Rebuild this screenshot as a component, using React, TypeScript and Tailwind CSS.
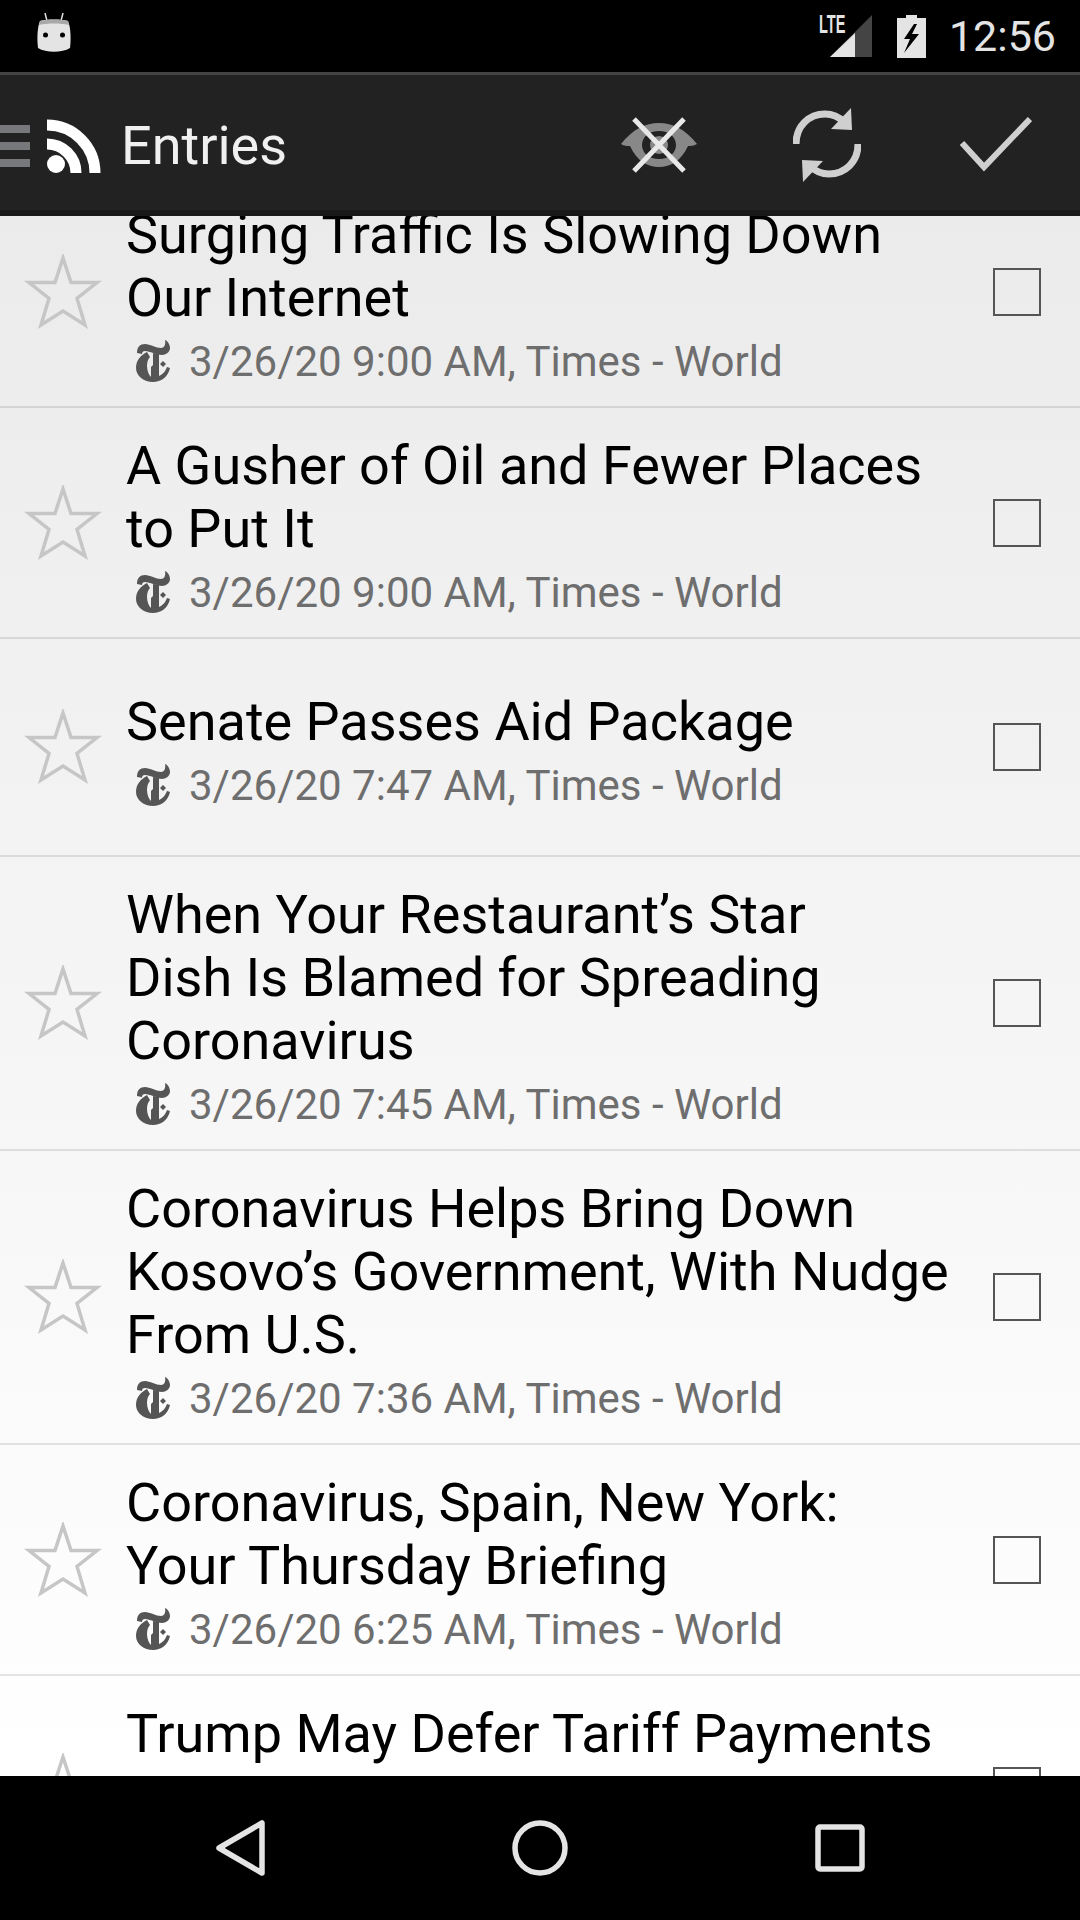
import React from 'react';

type Entry = { title: string[]; time: string };

const entries: Entry[] = [
  { title: ['Surging Traffic Is Slowing Down', 'Our Internet'], time: '3/26/20 9:00 AM' },
  { title: ['A Gusher of Oil and Fewer Places', 'to Put It'], time: '3/26/20 9:00 AM' },
  { title: ['Senate Passes Aid Package'], time: '3/26/20 7:47 AM' },
  { title: ['When Your Restaurant’s Star', 'Dish Is Blamed for Spreading', 'Coronavirus'], time: '3/26/20 7:45 AM' },
  { title: ['Coronavirus Helps Bring Down', 'Kosovo’s Government, With Nudge', 'From U.S.'], time: '3/26/20 7:36 AM' },
  { title: ['Coronavirus, Spain, New York:', 'Your Thursday Briefing'], time: '3/26/20 6:25 AM' },
  { title: ['Trump May Defer Tariff Payments', 'to Raise Money'], time: '3/26/20 6:20 AM' },
];

const StarIcon = () => (
  <svg width="78" height="76" viewBox="0 0 78 76" fill="none">
    <path
      d="M39 4 L47 28.5 L73 28.5 L53 44.5 L61 71 L39 57 L17 71 L25 44.5 L5 28.5 L31 28.5 Z"
      stroke="#c6c6c6"
      strokeWidth="3.5"
      strokeLinejoin="miter"
    />
  </svg>
);

// rough NYT blackletter T
const TimesIcon = () => (
  <svg width="34" height="42" viewBox="0 0 34 42" fill="#555555">
    <path d="M1 13 C1 7 4 4 9 4 C14 4 20 8 25 8 C28 8 30 5 29 0 C32 1 34 5 34 8 C34 12 30 15 26 15 C20 15 14 11 9 11 C7 11 6 12 6 14 Z" />
    <path
      fillRule="evenodd"
      d="M11 12 C5 15 0 20 0 28 C0 36 8 42 17 42 C25 42 32 37 34 28 L31 27 C29 32 27 34 23 36 L23 14 L17 13 L17 25 L15 27 L15 37 C13 35 11 31 11 26 C11 22 12 19 14 17 Z"
    />
    <path d="M24 24 L27 21 L30 24 L27 27 Z" />
  </svg>
);

const EntryRow = ({ entry }: { entry: Entry }) => (
  <div className="flex items-center min-h-[218px] border-b-[2px] border-black/10">
    <div className="w-[126px] shrink-0 pl-[24px]">
      <StarIcon />
    </div>
    <div className="flex-1 min-w-0 pt-[26px] pb-[13px]">
      <div className="text-[54px] leading-[63px] text-black whitespace-nowrap">
        {entry.title.map((line) => (
          <div key={line}>{line}</div>
        ))}
      </div>
      <div className="flex items-center h-[64px] pl-[10px] gap-[19px] text-[42px] text-[#6e6e6e] whitespace-nowrap">
        <TimesIcon />
        <span>{entry.time}, Times - World</span>
      </div>
    </div>
    <div className="w-[48px] h-[48px] border-[2px] border-[#555555] shrink-0 mr-[39px]" />
  </div>
);

const StatusBar = () => (
  <div className="h-[72px] bg-black shrink-0 flex items-center pl-[37px] pr-[24px] text-[#e4e4e4]">
    <svg width="34" height="42" viewBox="0 0 34 42" fill="none" className="mb-[7px]">
      <path d="M8 1 L10 9 M26 1 L24 9" stroke="#dddddd" strokeWidth="1.5" />
      <path d="M3 9 C10 7 24 7 31 9 C34 16 34 28 33 36 C25 41 9 41 1 36 C0 28 0 16 3 9 Z" fill="#e4e4e4" />
      <path d="M3 9 C10 7 24 7 31 9 L32 13 C24 11 10 11 2 13 Z" fill="#a8a8a8" />
      <circle cx="8.5" cy="23" r="2.5" fill="#000" />
      <circle cx="25.5" cy="23" r="2.5" fill="#000" />
    </svg>
    <div className="flex-1" />
    <div className="relative w-[53px] h-[42px]">
      <svg width="42" height="42" viewBox="0 0 42 42" className="absolute right-0 top-0">
        <path d="M42 0 V42 H0 Z" fill="#444444" />
        <path d="M25 18 V42 H0 Z" fill="#e4e4e4" />
      </svg>
      <span className="absolute left-0 top-[-5px] font-['Liberation_Sans'] font-bold text-[25px] leading-[28px] scale-x-[0.58] origin-left">LTE</span>
    </div>
    <svg width="29" height="43" viewBox="0 0 29 43" className="ml-[25px]">
      <path
        fillRule="evenodd"
        fill="#e4e4e4"
        d="M9 0 H20 V3 H29 V43 H0 V3 H9 Z M17 9 L7 24 H13 L7 38 L22 19 H15 L20 9 Z"
      />
    </svg>
    <span className="ml-[23px] text-[43px] leading-[72px] font-['Roboto',sans-serif]">12:56</span>
  </div>
);

const Toolbar = () => (
  <div className="h-[144px] shrink-0 bg-[#222222] border-t-[3px] border-b-[6px] border-t-[#444444] border-b-[#191919] flex items-center pt-[5px]">
    <div className="flex flex-col gap-[9px] w-[30px] mt-[2px]">
      <div className="h-[8px] bg-[#77787c]" />
      <div className="h-[8px] bg-[#77787c]" />
      <div className="h-[8px] bg-[#77787c]" />
    </div>
    <svg width="54" height="54" viewBox="0 0 54 54" fill="none" className="ml-[17px] mt-[2px]">
      <circle cx="9" cy="45" r="9" fill="#fff" />
      <path d="M0 25 A29 29 0 0 1 29 54 M0 6 A48 48 0 0 1 48 54" stroke="#fff" strokeWidth="11" />
    </svg>
    <span className="ml-[20px] mt-[2px] text-[54px] leading-none text-[#f0f0f0]">Entries</span>
    <div className="flex-1" />
    <svg width="76" height="56" viewBox="0 0 76 56" fill="none" className="mr-[96px]">
      <path
        fillRule="evenodd"
        fill="#888888"
        d="M0 27 C12 12 24 6 38 6 C52 6 64 12 76 27 C72 29 70 29 67 29 C60 44 50 50 38 50 C26 50 16 44 9 29 C6 29 3 29 0 27 Z M38 14 C28 14 21 20 21 28 C21 36 28 42 38 42 C48 42 55 36 55 28 C55 20 48 14 38 14 Z"
      />
      <circle cx="38" cy="28" r="9" fill="#888888" />
      <path d="M13 2 L63 54 M63 2 L13 54" stroke="#e8e8e8" strokeWidth="5" />
    </svg>
    <svg width="68" height="74" viewBox="0 0 68 74" fill="none" className="mr-[99px]">
      <path d="M3 36 C3 18 16 6 32 6 C40 6 46 9 51 14" stroke="#cfcfcf" strokeWidth="7" />
      <path d="M65 36 C65 54 52 66 36 66 C28 66 22 63 17 58" stroke="#cfcfcf" strokeWidth="7" />
      <path d="M58 0 L59 22 L38 21 Z" fill="#cfcfcf" />
      <path d="M10 74 L9 52 L30 53 Z" fill="#cfcfcf" />
    </svg>
    <svg width="72" height="56" viewBox="0 0 72 56" fill="none" className="mr-[48px]">
      <path d="M2 26 L24 50 L70 2" stroke="#cfcfcf" strokeWidth="6" />
    </svg>
  </div>
);

const NavBar = () => (
  <div className="h-[144px] shrink-0 bg-black flex items-center">
    <svg width="50" height="56" viewBox="0 0 50 56" fill="none" className="ml-[216px]">
      <path d="M46 3 V53 L3 28 Z" stroke="#e4e4e4" strokeWidth="5.5" strokeLinejoin="round" />
    </svg>
    <svg width="56" height="56" viewBox="0 0 56 56" fill="none" className="ml-[246px]">
      <circle cx="28" cy="28" r="25" stroke="#e4e4e4" strokeWidth="5.5" />
    </svg>
    <svg width="50" height="48" viewBox="0 0 50 48" fill="none" className="ml-[247px]">
      <rect x="3" y="3" width="44" height="42" rx="2" stroke="#e4e4e4" strokeWidth="5.5" />
    </svg>
  </div>
);

export default function App() {
  return (
    <div className="w-[1080px] h-[1920px] flex flex-col overflow-hidden font-['Roboto',sans-serif]">
      <StatusBar />
      <Toolbar />
      <div className="flex-1 min-h-0 overflow-hidden bg-gradient-to-b from-[#ebebeb] to-[#ffffff]">
        <div className="-mt-[39px]">
          {entries.map((entry) => (
            <EntryRow key={entry.title[0]} entry={entry} />
          ))}
        </div>
      </div>
      <NavBar />
    </div>
  );
}
